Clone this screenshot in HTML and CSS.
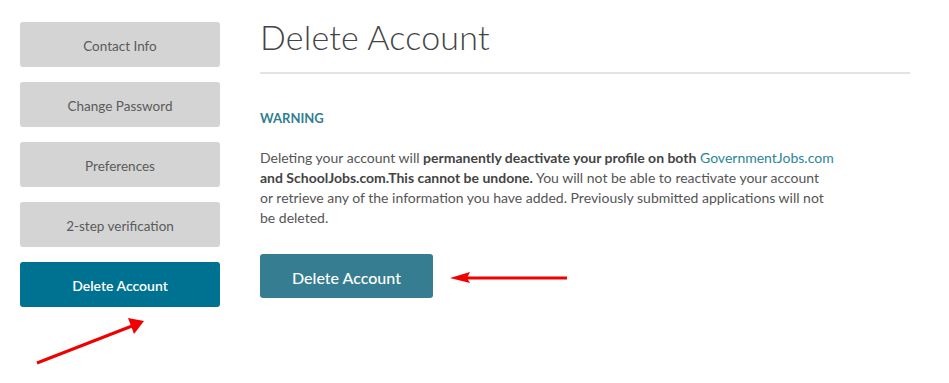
FILE: index.html
```html
<!DOCTYPE html>
<html>
<head>
<meta charset="utf-8">
<link rel="stylesheet" href="styles.css">
</head>
<body>
<div class="page">
  <nav class="sidebar">
    <div class="nav-btn">Contact Info</div>
    <div class="nav-btn">Change Password</div>
    <div class="nav-btn">Preferences</div>
    <div class="nav-btn">2-step verification</div>
    <div class="nav-btn active">Delete Account</div>
  </nav>
  <main class="content">
    <h1 class="title">Delete Account</h1>
    <h2 class="warning">WARNING</h2>
    <p class="desc">Deleting your account will <b>permanently deactivate your profile on both</b> <a class="link">GovernmentJobs.com</a><br><b>and SchoolJobs.com.This cannot be undone.</b> You will not be able to reactivate your account<br>or retrieve any of the information you have added. Previously submitted applications will not<br>be deleted.</p>
    <button class="delete-btn">Delete Account</button>
  </main>
</div>
<svg class="arrow arrow-left" width="130" height="60" viewBox="0 0 130 60">
  <line x1="5" y1="55" x2="100" y2="18" stroke="#f00000" stroke-width="3"/>
  <polygon points="112,13 96,10 102,26" fill="#f00000"/>
</svg>
<svg class="arrow arrow-right" width="122" height="20" viewBox="0 0 122 20">
  <line x1="18" y1="10" x2="119" y2="10" stroke="#f00000" stroke-width="3"/>
  <polygon points="2,10 22,4 19,10 22,15" fill="#f00000"/>
</svg>
</body>
</html>
```

FILE: styles.css
```css
html, body {
  margin: 0;
  padding: 0;
  background: #ffffff;
}
body {
  font-family: Lato, "Liberation Sans", sans-serif;
  width: 949px;
  height: 383px;
  position: relative;
  overflow: hidden;
}
.page {
  display: flex;
  padding: 22px 0 0 20px;
  gap: 40px;
}
.sidebar {
  display: flex;
  flex-direction: column;
  gap: 15px;
  width: 200px;
}
.nav-btn {
  height: 45px;
  background: #d4d4d4;
  border-radius: 3px;
  display: flex;
  align-items: center;
  justify-content: center;
  color: #5b5b5b;
  font-size: 13.5px;
  padding-top: 2px;
  box-sizing: border-box;
}
.nav-btn.active {
  background: #007291;
  color: #ffffff;
  font-weight: 600;
  font-size: 14px;
}
.content {
  width: 650px;
}
.title {
  margin: 0;
  font-size: 34px;
  font-weight: 300;
  color: #444444;
  line-height: 34px;
  padding-bottom: 18px;
  border-bottom: 2px solid #e3e3e3;
  letter-spacing: 0.2px;
  margin-top: -2px;
}
.warning {
  margin: 36px 0 0;
  font-size: 13px;
  font-weight: 700;
  color: #2f7f91;
  line-height: 16px;
}
.desc {
  margin: 22px 0 0;
  width: 600px;
  font-size: 14px;
  line-height: 20px;
  color: #555555;
}
.desc b {
  color: #444444;
  font-weight: 700;
}
.link {
  color: #2b8599;
}
.delete-btn {
  display: block;
  margin-top: 26px;
  width: 173px;
  height: 44px;
  border: none;
  border-radius: 3px;
  background: #367d91;
  color: #ffffff;
  font-family: Lato, "Liberation Sans", sans-serif;
  font-size: 16px;
  font-weight: 500;
  padding: 2px 0 0;
}
.arrow {
  position: absolute;
}
.arrow-left {
  left: 32px;
  top: 308px;
}
.arrow-right {
  left: 448px;
  top: 268px;
}
```
